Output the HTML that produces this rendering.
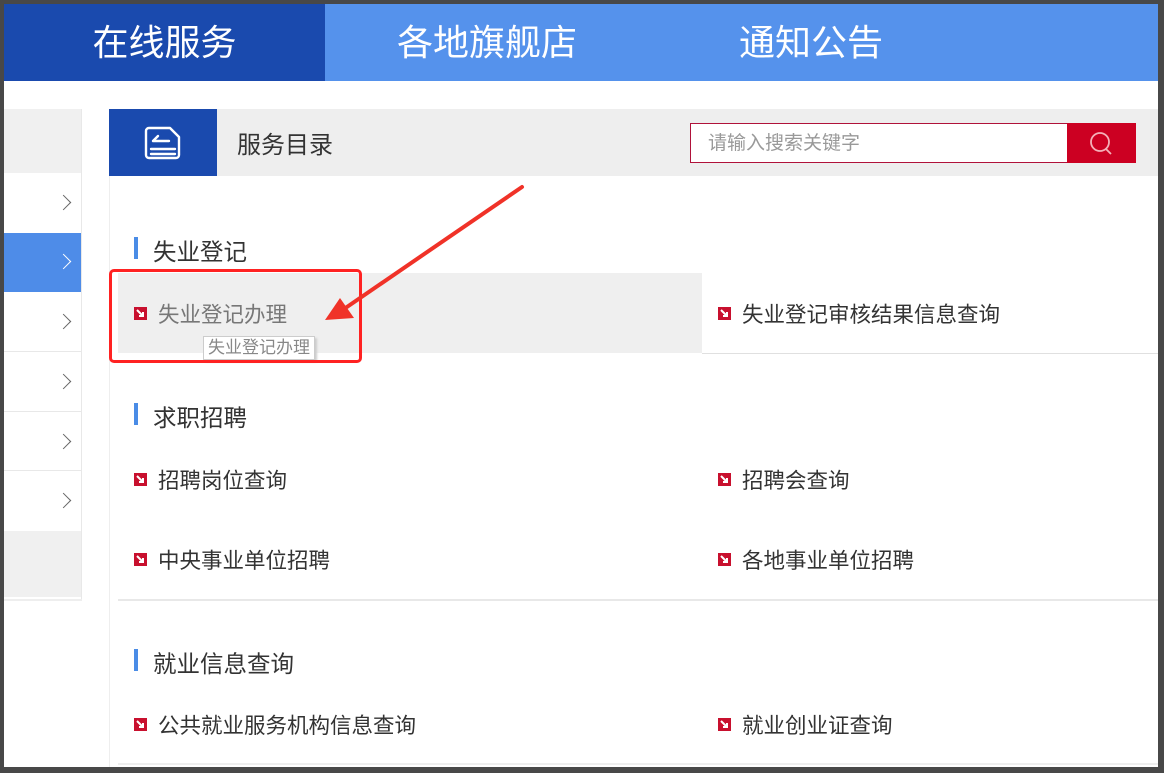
<!DOCTYPE html>
<html><head><meta charset="utf-8"><style>
*{margin:0;padding:0;box-sizing:border-box}
body{width:1164px;height:773px;overflow:hidden;background:#484848;position:relative;font-family:"Liberation Sans","Noto Sans CJK SC",sans-serif}
.page{position:absolute;left:4px;top:4px;width:1154px;height:763px;background:#fff;overflow:hidden}
.a{position:absolute}
.nav{top:0;height:77px;left:0;width:1154px;background:#5592ec}
.nav div{position:absolute;top:0;height:77px;line-height:77px;color:#fff;font-size:36px;text-align:center}
.chev{position:absolute;left:54px;width:11px;height:11px;border-right:1.5px solid #666;border-top:1.5px solid #666;transform:rotate(45deg)}
.hd{position:absolute;left:149px;font-size:23.5px;color:#333}
.hd:before{content:"";position:absolute;left:-19px;top:4px;width:4px;height:22px;background:#4a8ce6}
.it{position:absolute;font-size:21.5px;color:#333;padding-left:24px}
.it svg{position:absolute;left:0;top:9px}
</style></head><body>
<svg width="0" height="0" style="position:absolute"><symbol id="ic" viewBox="0 0 13 13"><rect width="13" height="13" fill="#c8102e"/><path d="M3 3l6 6M9 5v4H5" stroke="#fff" stroke-width="2" fill="none"/></symbol></svg>
<div class="page">
<div class="a nav">
<div style="left:0;width:321px;background:#1a4aae">在线服务</div>
<div style="left:321px;width:324px">各地旗舰店</div>
<div style="left:645px;width:324px">通知公告</div>
</div>
<div class="a" style="left:0;top:105px;width:78px;height:64px;background:#f0f0f0"></div>
<div class="a" style="left:77px;top:105px;width:1px;height:490px;background:#e8e8e8"></div>
<div class="a" style="left:0;top:169px;width:77px;height:60px;background:#fff"><i class="chev" style="top:24px"></i></div>
<div class="a" style="left:0;top:229px;width:77px;height:59px;background:#4e8ce8"><i class="chev" style="top:23px;border-color:#fff"></i></div>
<div class="a" style="left:0;top:288px;width:77px;height:60px;border-bottom:1px solid #e8e8e8"><i class="chev" style="top:24px"></i></div>
<div class="a" style="left:0;top:348px;width:77px;height:60px;border-bottom:1px solid #e8e8e8"><i class="chev" style="top:24px"></i></div>
<div class="a" style="left:0;top:408px;width:77px;height:59px;border-bottom:1px solid #e8e8e8"><i class="chev" style="top:24px"></i></div>
<div class="a" style="left:0;top:467px;width:77px;height:60px"><i class="chev" style="top:24px"></i></div>
<div class="a" style="left:0;top:527px;width:77px;height:66px;background:#f0f0f0"></div>
<div class="a" style="left:0;top:595px;width:78px;height:2px;background:#eee"></div>
<div class="a" style="left:105px;top:105px;width:1049px;height:67px;background:#eeeeee"></div>
<div class="a" style="left:105px;top:105px;width:108px;height:67px;background:#1a4aae">
<svg width="108" height="67"><g fill="none" stroke="#fff" stroke-width="2.4" stroke-linecap="round" stroke-linejoin="round"><path d="M41 19h20l9 9v18a3 3 0 0 1-3 3H40a3 3 0 0 1-3-3V22a3 3 0 0 1 3-3z"/><path d="M44 32h16M49 27l-5 5"/><path d="M42 40h24M42 45h24"/></g></svg></div>
<div class="a" style="left:233px;top:121px;font-size:24px;color:#333">服务目录</div>
<div class="a" style="left:686px;top:119px;width:378px;height:40px;border:1px solid #b0123a;background:#fff;font-size:19px;color:#999;line-height:40px;padding-left:17px">请输入搜索关键字</div>
<div class="a" style="left:1063px;top:119px;width:69px;height:40px;background:#cc0022"><svg width="69" height="40"><circle cx="33" cy="19" r="9" fill="none" stroke="#f4b0b8" stroke-width="1.8"/><path d="M39 26l5 5" stroke="#f4b0b8" stroke-width="1.8"/></svg></div>
<div class="a" style="left:105px;top:172px;width:1px;height:600px;background:#eee"></div>
<div class="a" style="left:114px;top:269px;width:584px;height:80px;background:#efefef"></div>
<div class="a" style="left:698px;top:349px;width:456px;height:1px;background:#e0e0e0"></div>
<div class="a" style="left:114px;top:595px;width:1040px;height:2px;background:#e8e8e8"></div>
<div class="hd" style="top:229px">失业登记</div>
<div class="it" style="left:130px;top:294px;color:#777"><svg width="13" height="13"><use href="#ic"/></svg>失业登记办理</div>
<div class="a" style="left:199px;top:332px;border:1px solid #ccc;background:#fff;color:#888;font-size:17px;padding:0 4px;line-height:22px;box-shadow:2px 2px 2px #ccc">失业登记办理</div>
<div class="it" style="left:714px;top:294px"><svg width="13" height="13"><use href="#ic"/></svg>失业登记审核结果信息查询</div>
<div class="hd" style="top:395px">求职招聘</div>
<div class="it" style="left:130px;top:460px"><svg width="13" height="13"><use href="#ic"/></svg>招聘岗位查询</div>
<div class="it" style="left:714px;top:460px"><svg width="13" height="13"><use href="#ic"/></svg>招聘会查询</div>
<div class="it" style="left:130px;top:540px"><svg width="13" height="13"><use href="#ic"/></svg>中央事业单位招聘</div>
<div class="it" style="left:714px;top:540px"><svg width="13" height="13"><use href="#ic"/></svg>各地事业单位招聘</div>
<div class="hd" style="top:641px">就业信息查询</div>
<div class="it" style="left:130px;top:705px"><svg width="13" height="13"><use href="#ic"/></svg>公共就业服务机构信息查询</div>
<div class="it" style="left:714px;top:705px"><svg width="13" height="13"><use href="#ic"/></svg>就业创业证查询</div>
<div class="a" style="left:114px;top:759px;width:1040px;height:2px;background:#eee"></div>
<div class="a" style="left:105px;top:265px;width:253px;height:94px;border:3.5px solid #ff2222;border-radius:5px"></div>
<svg class="a" style="left:0;top:0" width="1154" height="763"><path d="M518 183L340 305" stroke="#f03228" stroke-width="4" stroke-linecap="round"/><path d="M321 316l29-2-14-20z" fill="#f03228"/></svg>
</div>
</body></html>
